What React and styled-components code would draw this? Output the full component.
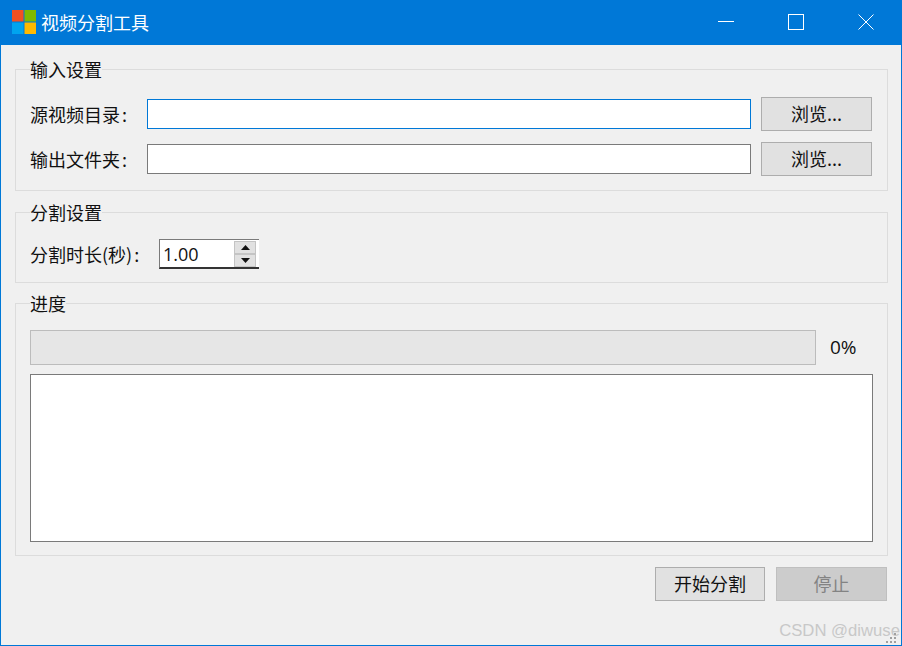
import styled, { createGlobalStyle } from 'styled-components'

const GlobalStyle = createGlobalStyle`
    * {
        box-sizing: border-box;
    }
    html, body {
        margin: 0;
        padding: 0;
        background: #f0f0f0;
    }
    body {
        font-family: "Noto Sans CJK SC", "Liberation Sans", sans-serif;
        color: #111;
    }
`

export default function App() {
    return (
        <Window>
            <GlobalStyle />
            <TitleBar>
                <Logo viewBox="0 0 24 24">
                    <rect x="0" y="0" width="11.5" height="11.5" fill="#f25022" />
                    <rect x="12.5" y="0" width="11.5" height="11.5" fill="#7fba00" />
                    <rect x="0" y="12.5" width="11.5" height="11.5" fill="#00a4ef" />
                    <rect x="12.5" y="12.5" width="11.5" height="11.5" fill="#ffb900" />
                </Logo>
                <AppTitle>视频分割工具</AppTitle>
                <WindowControls>
                    <ControlIcon viewBox="0 0 16 16">
                        <path d="M0 7.5H16" />
                    </ControlIcon>
                    <ControlIcon viewBox="0 0 16 16">
                        <rect x="0.5" y="0.5" width="15" height="15" />
                    </ControlIcon>
                    <ControlIcon viewBox="0 0 16 16">
                        <path d="M0.5 0.5L15.5 15.5M15.5 0.5L0.5 15.5" />
                    </ControlIcon>
                </WindowControls>
            </TitleBar>

            <Content>
                <Group $bottom={14}>
                    <GroupTitle>输入设置</GroupTitle>
                    <Rows>
                        <FieldRow>
                            <FieldLabel>源视频目录<Colon>:</Colon></FieldLabel>
                            <PathInput $focused />
                            <Button>浏览...</Button>
                        </FieldRow>
                        <FieldRow>
                            <FieldLabel>输出文件夹<Colon>:</Colon></FieldLabel>
                            <PathInput />
                            <Button>浏览...</Button>
                        </FieldRow>
                    </Rows>
                </Group>

                <Group $top={17} $bottom={13} $spaced>
                    <GroupTitle>分割设置</GroupTitle>
                    <SpinRow>
                        <SpinLabel>分割时长(秒)<Colon>:</Colon></SpinLabel>
                        <SpinBox>
                            <SpinValue>1.00</SpinValue>
                            <SpinButtons>
                                <SpinButton>
                                    <Arrow viewBox="0 0 9 5"><path d="M4.5 0L9 5H0Z" /></Arrow>
                                </SpinButton>
                                <SpinButton>
                                    <Arrow viewBox="0 0 9 5"><path d="M0 0H9L4.5 5Z" /></Arrow>
                                </SpinButton>
                            </SpinButtons>
                        </SpinBox>
                    </SpinRow>
                </Group>

                <Group $top={17} $bottom={13}>
                    <GroupTitle>进度</GroupTitle>
                    <ProgressRow>
                        <ProgressBar />
                        <Percent>0%</Percent>
                    </ProgressRow>
                    <LogBox />
                </Group>

                <Actions>
                    <Button $width={110}>开始分割</Button>
                    <Button $disabled>停止</Button>
                </Actions>
            </Content>

            <Watermark>CSDN @diwuse</Watermark>
            <SizeGrip viewBox="0 0 12 12">
                <rect x="8" y="2" width="2" height="2" />
                <rect x="4" y="6" width="2" height="2" />
                <rect x="8" y="6" width="2" height="2" />
                <rect x="0" y="10" width="2" height="2" />
                <rect x="4" y="10" width="2" height="2" />
                <rect x="8" y="10" width="2" height="2" />
            </SizeGrip>
        </Window>
    )
}

const Window = styled.div`
    position: relative;
    width: 902px;
    height: 646px;
    overflow: hidden;
    background: #f0f0f0;
    border: 1px solid #0078d7;
`

const TitleBar = styled.div`
    height: 44px;
    display: flex;
    align-items: center;
    padding: 0 0 2px 11px;
    background: #0078d7;
`

const Logo = styled.svg`
    width: 24px;
    height: 24px;
    flex: none;
`

const AppTitle = styled.div`
    margin-left: 5px;
    font-size: 18px;
    line-height: 24px;
    color: #fff;
`

const WindowControls = styled.div`
    margin-left: auto;
    display: flex;
    align-items: center;
    gap: 54px;
    padding-right: 27px;
`

const ControlIcon = styled.svg`
    width: 16px;
    height: 16px;
    fill: none;
    stroke: #fff;
    stroke-width: 1;
`

const Content = styled.div`
    display: flex;
    flex-direction: column;
    padding: 15px 13px 0 14px;
`

const Group = styled.fieldset`
    margin: ${props => (props.$spaced ? '12px 0 11px' : '0')};
    min-width: 0;
    padding: ${props => props.$top ?? 18}px 15px ${props => props.$bottom ?? 14}px 14px;
    border: 1px solid #dcdcdc;
`

const GroupTitle = styled.legend`
    height: 19px;
    padding: 0;
    font-size: 18px;
    line-height: 19px;
    color: #111;
`

const Rows = styled.div`
    display: flex;
    flex-direction: column;
    gap: 11px;
`

const FieldRow = styled.div`
    height: 34px;
    display: flex;
    align-items: center;
`

const FieldLabel = styled.div`
    width: 117px;
    flex: none;
    padding-bottom: 1px;
    font-size: 18px;
    line-height: 24px;
`

const Colon = styled.span`
    margin-left: 2px;
`

const PathInput = styled.div`
    width: 604px;
    height: 30px;
    flex: none;
    background: #fff;
    border: 1px solid ${props => (props.$focused ? '#0078d7' : '#7a7a7a')};
`

const Button = styled.div`
    width: ${props => props.$width ?? 111}px;
    height: 34px;
    flex: none;
    display: flex;
    align-items: center;
    justify-content: center;
    margin-left: auto;
    padding-bottom: 2px;
    font-size: 18px;
    line-height: 24px;
    color: ${props => (props.$disabled ? '#838383' : '#111')};
    background: ${props => (props.$disabled ? '#cccccc' : '#e1e1e1')};
    border: 1px solid ${props => (props.$disabled ? '#bfbfbf' : '#adadad')};
`

const SpinRow = styled.div`
    height: 30px;
    display: flex;
    align-items: center;
`

const SpinLabel = styled.div`
    width: 129px;
    flex: none;
    padding-bottom: 1px;
    font-size: 18px;
    line-height: 24px;
`

const SpinBox = styled.div`
    width: 100px;
    height: 30px;
    display: flex;
    align-items: center;
    justify-content: space-between;
    padding: 0 3px 0 3px;
    background: #fff;
    border-top: 1px solid #7a7a7a;
    border-left: 1px solid #7a7a7a;
    border-bottom: 2px solid #333;
`

const SpinValue = styled.div`
    font-family: "Open Sans", "Noto Sans CJK SC", sans-serif;
    font-size: 18px;
    line-height: 24px;
    color: #111;
`

const SpinButtons = styled.div`
    display: flex;
    flex-direction: column;
    width: 22px;
    height: 26px;
`

const SpinButton = styled.div`
    flex: 1;
    display: flex;
    align-items: center;
    justify-content: center;
    background: #e1e1e1;
    border: 1px solid #c4c4c4;
`

const Arrow = styled.svg`
    width: 9px;
    height: 5px;
    fill: #111;
`

const ProgressRow = styled.div`
    display: flex;
    align-items: center;
    height: 35px;
`

const ProgressBar = styled.div`
    width: 786px;
    height: 35px;
    flex: none;
    background: #e6e6e6;
    border: 1px solid #bcbcbc;
`

const Percent = styled.div`
    margin-left: 14px;
    padding-bottom: 2px;
    font-family: "Open Sans", "Noto Sans CJK SC", sans-serif;
    font-size: 19px;
    line-height: 24px;
`

const LogBox = styled.div`
    width: 843px;
    height: 168px;
    margin-top: 9px;
    background: #fff;
    border: 1px solid #7a7a7a;
`

const Actions = styled.div`
    display: flex;
    justify-content: flex-end;
    gap: 11px;
    margin-top: 11px;
    padding-right: 1px;

    ${Button} {
        margin-left: 0;
    }
`

const Watermark = styled.div`
    position: absolute;
    right: 1px;
    bottom: 4px;
    font-family: "Liberation Sans", sans-serif;
    font-size: 16.7px;
    line-height: 20px;
    color: #c8c8c8;
`

const SizeGrip = styled.svg`
    position: absolute;
    right: 3px;
    bottom: 2px;
    width: 12px;
    height: 12px;
    fill: #a0a0a0;
`
